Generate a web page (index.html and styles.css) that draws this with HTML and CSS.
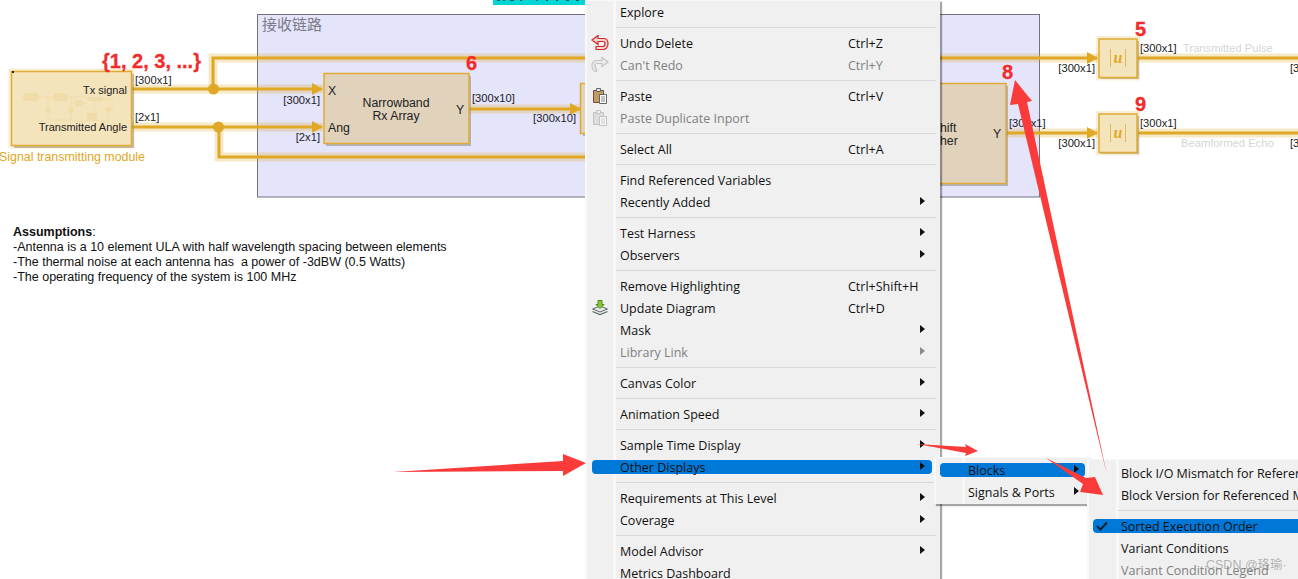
FILE: index.html
```html
<!DOCTYPE html>
<html lang="en">
<head>
    <meta charset="UTF-8">
    <meta name="viewport" content="width=device-width, initial-scale=1.0">
    <title>Model context menu</title>
    <link rel="stylesheet" href="styles.css">
</head>
<body>

<div class="canvas">

    <!-- Block diagram -->
    <svg class="diagram" width="1298" height="579" viewBox="0 0 1298 579">
        <defs>
            <marker id="head" markerUnits="userSpaceOnUse" markerWidth="11" markerHeight="12" refX="10" refY="6" orient="auto">
                <path d="M0 0L11 6L0 12Z" fill="#dfa825"/>
            </marker>
        </defs>

        <rect class="teal" x="493" y="0" width="92" height="5"/>
        <path class="teal-ink" d="M497 0h3v1h-3zM503 0h2v1h-2zM510 0h4v1h-4zM520 0h2v1h-2zM536 0h2v1h-2zM546 0h2v1h-2zM556 0h2v1h-2zM566 0h3v1h-3zM576 0h3v1h-3z"/>
        <rect class="subsystem" x="257.5" y="14.5" width="782" height="182.5"/>
        <text class="subsystem-title" x="262" y="30">接收链路</text>

        <!-- wire halos -->
        <g class="halo">
            <path d="M132 89H323M213 89V58H1098"/>
            <path d="M132 127H323M219 127V157H585"/>
            <path d="M469 109H580"/>
            <path d="M1006 133H1098"/>
            <path d="M1138 58H1298"/>
            <path d="M1138 133H1298"/>
        </g>
        <!-- wires -->
        <g class="wire">
            <path d="M132 89H322" marker-end="url(#head)"/>
            <path d="M213 89V58H1097" marker-end="url(#head)"/>
            <path d="M132 127H322" marker-end="url(#head)"/>
            <path d="M219 127V157H585"/>
            <path d="M469 109H580" marker-end="url(#head)"/>
            <path d="M1006 133H1097" marker-end="url(#head)"/>
            <path d="M1138 58H1298"/>
            <path d="M1138 133H1298"/>
        </g>
        <circle class="dot" cx="213.5" cy="89" r="5.5"/>
        <circle class="dot" cx="218.5" cy="127" r="5.5"/>

        <!-- signal source block -->
        <rect class="shadow" x="14" y="74" width="120" height="74"/>
        <rect class="glow" x="11.500" y="71.500" width="120" height="74"/>
        <rect class="block gold" x="11.500" y="71.500" width="120" height="74"/>
        <g class="thumb-fill">
            <rect x="23" y="93" width="16" height="8" rx="4"/>
            <rect x="53" y="93" width="15" height="8" rx="4"/>
            <rect x="87" y="97" width="16" height="4" rx="2"/>
            <rect x="75" y="100" width="8" height="7"/>
            <rect x="87" y="113" width="10" height="8"/>
            <circle cx="48" cy="110" r="3"/>
            <circle cx="71" cy="110" r="3"/>
            <circle cx="108" cy="110" r="3"/>
        </g>
        <path class="thumb-line" d="M39 97H53M68 97H87M103 99H112V110M48 97V120H71V97M75 103H71M83 103H87M108 113V121H97M71 110V121H87M95 97V113"/>
        <path class="corner" d="M12 71h2v2h-2z"/>

        <!-- other blocks -->
        <rect class="shadow" x="326" y="76" width="145" height="70"/>
        <rect class="block tan" x="324" y="73.500" width="145" height="70"/>
        <rect class="shadow" x="583" y="86" width="10" height="50"/>
        <rect class="block tan" x="580.500" y="83.500" width="20" height="50"/>
        <rect class="shadow" x="900" y="86" width="108" height="100"/>
        <rect class="block tan" x="900" y="83.500" width="106" height="100"/>

        <rect class="shadow" x="1101" y="41" width="38" height="38"/>
        <rect class="glow" x="1099" y="39" width="38" height="38.500"/>
        <rect class="block gold" x="1099" y="39" width="38" height="38.500"/>
        <path class="bars" d="M1110.500 49V67M1125.500 49V67"/>
        <text class="abs" x="1118" y="63">u</text>

        <rect class="shadow" x="1101" y="116" width="38" height="38"/>
        <rect class="glow" x="1099" y="114" width="38" height="38.500"/>
        <rect class="block gold" x="1099" y="114" width="38" height="38.500"/>
        <path class="bars" d="M1110.500 124V142M1125.500 124V142"/>
        <text class="abs" x="1118" y="138">u</text>

        <!-- block text -->
        <g class="port">
            <text x="328" y="95">X</text>
            <text x="328" y="132">Ang</text>
            <text x="456" y="114">Y</text>
            <text x="396" y="107" text-anchor="middle">Narrowband</text>
            <text x="396" y="120" text-anchor="middle">Rx Array</text>
            <text x="940" y="132">hift</text>
            <text x="940" y="145">her</text>
            <text x="993" y="138">Y</text>
        </g>
        <g class="port-small">
            <text x="127" y="94" text-anchor="end">Tx signal</text>
            <text x="127" y="131" text-anchor="end">Transmitted Angle</text>
        </g>
        <text class="block-name" x="-1" y="161">Signal transmitting module</text>

        <!-- signal dimensions -->
        <g class="dim">
            <text x="135" y="84">[300x1]</text>
            <text x="320" y="104" text-anchor="end">[300x1]</text>
            <text x="135" y="121">[2x1]</text>
            <text x="320" y="141" text-anchor="end">[2x1]</text>
            <text x="472" y="102">[300x10]</text>
            <text x="576" y="122" text-anchor="end">[300x10]</text>
            <text x="1095" y="72" text-anchor="end">[300x1]</text>
            <text x="1140" y="52">[300x1]</text>
            <text x="1009" y="127">[300x1]</text>
            <text x="1095" y="147" text-anchor="end">[300x1]</text>
            <text x="1140" y="127">[300x1]</text>
            <text x="1290" y="72">[300x1]</text>
            <text x="1290" y="147">[300x1]</text>
        </g>
        <text class="faint" x="1183" y="52">Transmitted Pulse</text>
        <text class="faint" x="1181" y="147">Beamformed Echo</text>

        <!-- red notes -->
        <g class="note">
            <text x="102" y="68">{1, 2, 3, ...}</text>
            <text x="466" y="70">6</text>
            <text x="1002" y="79">8</text>
            <text x="1135" y="36">5</text>
            <text x="1135" y="111">9</text>
        </g>
    </svg>

    <div class="assumptions">
        <p><strong>Assumptions</strong>:</p>
        <p>-Antenna is a 10 element ULA with half wavelength spacing between elements</p>
        <p>-The thermal noise at each antenna has&nbsp; a power of -3dBW (0.5 Watts)</p>
        <p>-The operating frequency of the system is 100 MHz</p>
    </div>

    <!-- Main context menu -->
    <div class="menu menu-main">
        <div class="row"><span class="slot"></span><span class="label">Explore</span></div>
        <div class="sep"></div>
        <div class="row">
            <span class="slot">
                <svg class="ico" width="18" height="16" viewBox="0 0 18 16"><path d="M1 5L7 0.500V3.500H12.500C15.500 3.500 17 5.500 17 8.500C17 12 15 14.500 12 14.500H5V11.500H12C13.500 11.500 14 10 14 8.500C14 7 13.500 6.500 12 6.500H7V9.500Z" fill="#f6d2d2" stroke="#d42a2a" stroke-width="1.200"/></svg>
            </span>
            <span class="label">Undo Delete</span><span class="key">Ctrl+Z</span>
        </div>
        <div class="row off">
            <span class="slot">
                <svg class="ico" width="18" height="16" viewBox="0 0 18 16"><path d="M17 5L11 0.500V3.500H6C3 3.500 1 5.500 1 8.500C1 12 3 14.500 5.500 14.500V11.500C4.500 11.500 4 10 4 8.500C4 7 4.500 6.500 6 6.500H11V9.500Z" fill="#ececec" stroke="#c4c4c4" stroke-width="1.200"/></svg>
            </span>
            <span class="label">Can't Redo</span><span class="key">Ctrl+Y</span>
        </div>
        <div class="sep"></div>
        <div class="row">
            <span class="slot">
                <svg class="ico" width="18" height="18" viewBox="0 0 18 18"><path d="M2.500 3.500H12.500V15.500H2.500Z" fill="#c69a63" stroke="#6e5338"/><path d="M5.500 4.500V1.500H9.500V4.500Z" fill="#e2e2e2" stroke="#666"/><path d="M8.500 7.500H15.500V16.500H8.500Z" fill="#fff" stroke="#666"/><path d="M10 10H14M10 12H14M10 14H14" stroke="#888"/></svg>
            </span>
            <span class="label">Paste</span><span class="key">Ctrl+V</span>
        </div>
        <div class="row off">
            <span class="slot">
                <svg class="ico" width="18" height="18" viewBox="0 0 18 18"><path d="M2.500 3.500H12.500V15.500H2.500Z" fill="#dedede" stroke="#c2c2c2"/><path d="M5.500 4.500V1.500H9.500V4.500Z" fill="#eee" stroke="#c2c2c2"/><path d="M8.500 7.500H15.500V16.500H8.500Z" fill="#f6f6f6" stroke="#c2c2c2"/><path d="M10 10H14M10 12H14M10 14H14" stroke="#ccc"/></svg>
            </span>
            <span class="label">Paste Duplicate Inport</span>
        </div>
        <div class="sep"></div>
        <div class="row"><span class="slot"></span><span class="label">Select All</span><span class="key">Ctrl+A</span></div>
        <div class="sep"></div>
        <div class="row"><span class="slot"></span><span class="label">Find Referenced Variables</span></div>
        <div class="row sub"><span class="slot"></span><span class="label">Recently Added</span></div>
        <div class="sep"></div>
        <div class="row sub"><span class="slot"></span><span class="label">Test Harness</span></div>
        <div class="row sub"><span class="slot"></span><span class="label">Observers</span></div>
        <div class="sep"></div>
        <div class="row"><span class="slot"></span><span class="label">Remove Highlighting</span><span class="key">Ctrl+Shift+H</span></div>
        <div class="row">
            <span class="slot">
                <svg class="ico" width="18" height="16" viewBox="0 0 18 16"><path d="M1.500 9L9 6L16.500 9L9 12Z" fill="#e8e8e8" stroke="#5c6a6a"/><path d="M1.500 11.500L9 14.500L16.500 11.500" fill="none" stroke="#5c6a6a" stroke-width="1.300"/><path d="M7 0.500H11V4.500H13L9 8.500L5 4.500H7Z" fill="#8cc63f" stroke="#4d8a1c"/></svg>
            </span>
            <span class="label">Update Diagram</span><span class="key">Ctrl+D</span>
        </div>
        <div class="row sub"><span class="slot"></span><span class="label">Mask</span></div>
        <div class="row sub off"><span class="slot"></span><span class="label">Library Link</span></div>
        <div class="sep"></div>
        <div class="row sub"><span class="slot"></span><span class="label">Canvas Color</span></div>
        <div class="sep"></div>
        <div class="row sub"><span class="slot"></span><span class="label">Animation Speed</span></div>
        <div class="sep"></div>
        <div class="row sub"><span class="slot"></span><span class="label">Sample Time Display</span></div>
        <div class="row sub active"><span class="slot"></span><span class="label">Other Displays</span></div>
        <div class="sep"></div>
        <div class="row sub"><span class="slot"></span><span class="label">Requirements at This Level</span></div>
        <div class="row sub"><span class="slot"></span><span class="label">Coverage</span></div>
        <div class="sep"></div>
        <div class="row sub"><span class="slot"></span><span class="label">Model Advisor</span></div>
        <div class="row"><span class="slot"></span><span class="label">Metrics Dashboard</span></div>
    </div>

    <!-- Other Displays submenu -->
    <div class="menu menu-displays">
        <div class="row sub active"><span class="slot"></span><span class="label">Blocks</span></div>
        <div class="row sub"><span class="slot"></span><span class="label">Signals &amp; Ports</span></div>
    </div>

    <!-- Blocks submenu -->
    <div class="menu menu-blocks">
        <div class="row"><span class="slot"></span><span class="label">Block I/O Mismatch for Referenced Model</span></div>
        <div class="row"><span class="slot"></span><span class="label">Block Version for Referenced Model</span></div>
        <div class="sep"></div>
        <div class="row active">
            <span class="slot">
                <svg class="ico" width="12" height="10" viewBox="0 0 12 10"><path d="M1 5L4.500 8.500L11 1.500" fill="none" stroke="#123" stroke-width="2"/></svg>
            </span>
            <span class="label">Sorted Execution Order</span>
        </div>
        <div class="row"><span class="slot"></span><span class="label">Variant Conditions</span></div>
        <div class="row off"><span class="slot"></span><span class="label">Variant Condition Legend</span></div>
    </div>

    <!-- Red arrows drawn over the screenshot -->
    <svg class="arrows" width="1298" height="579" viewBox="0 0 1298 579">
        <path d="M393 472L563 461V454L586 463L563 476V471Z"/>
        <path d="M917 444L966 447L965 444L978 451L965 456L966 453Z"/>
        <path d="M1046 458L1086 478L1095 477L1103 495L1080 492L1083 484Z"/>
        <path d="M1107 475L1027 102L1032 101L1015 80L1010 105L1018 104Z"/>
    </svg>

    <div class="watermark">CSDN @珞瑜·</div>
</div>

</body>
</html>
```

FILE: styles.css
```css
body {
    margin: 0;
    background-color: #fff;
}

.canvas {
    position: relative;
    width: 1298px;
    height: 579px;
    overflow: hidden;
    background-color: #fff;
}

.diagram,
.arrows {
    position: absolute;
    top: 0;
    left: 0;
}

/* Diagram */
.diagram text {
    font-family: "Liberation Sans", Arial, sans-serif;
}

.teal {
    fill: #00d6d6;
}

.teal-ink {
    fill: #2b5a5a;
}

.subsystem {
    fill: #e4e4fb;
    stroke: #70707e;
    stroke-width: 1;
}

.diagram .subsystem-title {
    font-family: "Noto Sans CJK SC", sans-serif;
    font-size: 15px;
    fill: #7a7a88;
}

.halo path {
    fill: none;
    stroke: #dfa825;
    stroke-opacity: 0.25;
    stroke-width: 9;
}

.wire path {
    fill: none;
    stroke: #dfa825;
    stroke-width: 3;
}

.dot {
    fill: #dfa825;
}

.block {
    stroke-width: 1.500;
}

.gold {
    fill: #f4e4bc;
    stroke: #dfaa35;
}

.tan {
    fill: #e1d2bb;
    stroke: #dfaa35;
}

.shadow {
    fill: #8a8a8a;
    opacity: 0.55;
}

.glow {
    fill: none;
    stroke: #dfa825;
    stroke-opacity: 0.2;
    stroke-width: 6;
}

.thumb-fill {
    fill: #f0dcaa;
}

.thumb-line {
    fill: none;
    stroke: #f0dcaa;
    stroke-width: 1;
}

.corner {
    fill: #222;
}

.bars {
    fill: none;
    stroke: #e3b65a;
    stroke-width: 1;
}

.diagram .abs {
    font-family: "Liberation Serif", serif;
    font-size: 16px;
    font-style: italic;
    font-weight: bold;
    fill: #dfa825;
    text-anchor: middle;
}

.port text {
    font-size: 12.300px;
    fill: #222;
}

.port-small text {
    font-size: 11px;
    fill: #222;
}

.block-name {
    font-size: 12.400px;
    fill: #dfa825;
}

.dim text {
    font-size: 11.200px;
    fill: #222;
}

.faint {
    font-size: 11.200px;
    fill: #d6d6d6;
}

.note text {
    font-size: 20px;
    font-weight: bold;
    fill: #f12c2c;
    stroke: #f12c2c;
    stroke-width: 0.300;
}

/* Assumptions text */
.assumptions {
    position: absolute;
    top: 225px;
    left: 13px;
    font-family: "Liberation Sans", Arial, sans-serif;
    font-size: 12.500px;
    line-height: 15px;
    color: #111;
}

.assumptions p {
    margin: 0;
    white-space: nowrap;
}

/* Menus */
.menu {
    position: absolute;
    box-sizing: border-box;
    font-family: "Open Sans", sans-serif;
    font-size: 12.500px;
    color: #111;
    background-color: #f0f0f0;
    border-left: 2px solid #f8f8f8;
    border-top: 1px solid #f8f8f8;
    box-shadow: 2px 2px 1px rgba(0, 0, 0, 0.35);
}

.menu-main {
    top: 0;
    left: 585px;
    width: 355px;
    height: 600px;
    background-image: linear-gradient(to right, #f0f0f0 26px, #f8f8f8 26px, #f8f8f8 29px, #f0f0f0 29px);
}

.menu-displays {
    top: 457px;
    left: 934px;
    width: 156px;
    padding: 1px 0;
    background-image: linear-gradient(to right, #f0f0f0 26px, #f8f8f8 26px, #f8f8f8 29px, #f0f0f0 29px);
}

.menu-blocks {
    top: 459px;
    left: 1087px;
    width: 300px;
    height: 140px;
    padding-top: 2px;
    background-image: linear-gradient(to right, #f0f0f0 27px, #f8f8f8 27px, #f8f8f8 30px, #f0f0f0 30px);
}

.row {
    position: relative;
    isolation: isolate;
    display: flex;
    align-items: center;
    height: 22px;
    white-space: nowrap;
}

.slot {
    display: flex;
    align-items: center;
    flex: none;
    width: 33px;
    padding-left: 4px;
    box-sizing: border-box;
}

.menu-displays .slot,
.menu-blocks .slot {
    width: 32px;
}

.label {
    width: 228px;
    flex: none;
}

.menu-blocks .label {
    width: auto;
}

.off {
    color: #808080;
}

.sub::after {
    content: "";
    position: absolute;
    top: 6px;
    right: 15px;
    border-left: 5px solid #111;
    border-top: 4.500px solid transparent;
    border-bottom: 4.500px solid transparent;
}

.off.sub::after {
    border-left-color: #8a8a8a;
}

.menu-displays .sub::after {
    right: 11px;
}

.active::before {
    content: "";
    position: absolute;
    z-index: -1;
    top: 4px;
    left: 5px;
    right: 8px;
    height: 14px;
    border-radius: 4px;
    background-color: #0078d7;
}

.menu-displays .active::before {
    left: 4px;
    right: 5px;
}

.menu-blocks .active::before {
    left: 4px;
    right: 0;
}

.menu-blocks .slot {
    padding-left: 7px;
}

.sep {
    height: 1px;
    margin: 4px 4px 4px 29px;
    background-color: #d8d8d8;
}

/* Overlays */
.arrows {
    pointer-events: none;
}

.arrows path {
    fill: #fb3a3a;
}

.watermark {
    position: absolute;
    top: 554px;
    left: 1206px;
    font-family: "Liberation Sans", "Noto Sans CJK SC", sans-serif;
    font-size: 12.500px;
    color: rgba(120, 120, 120, 0.55);
}
```
